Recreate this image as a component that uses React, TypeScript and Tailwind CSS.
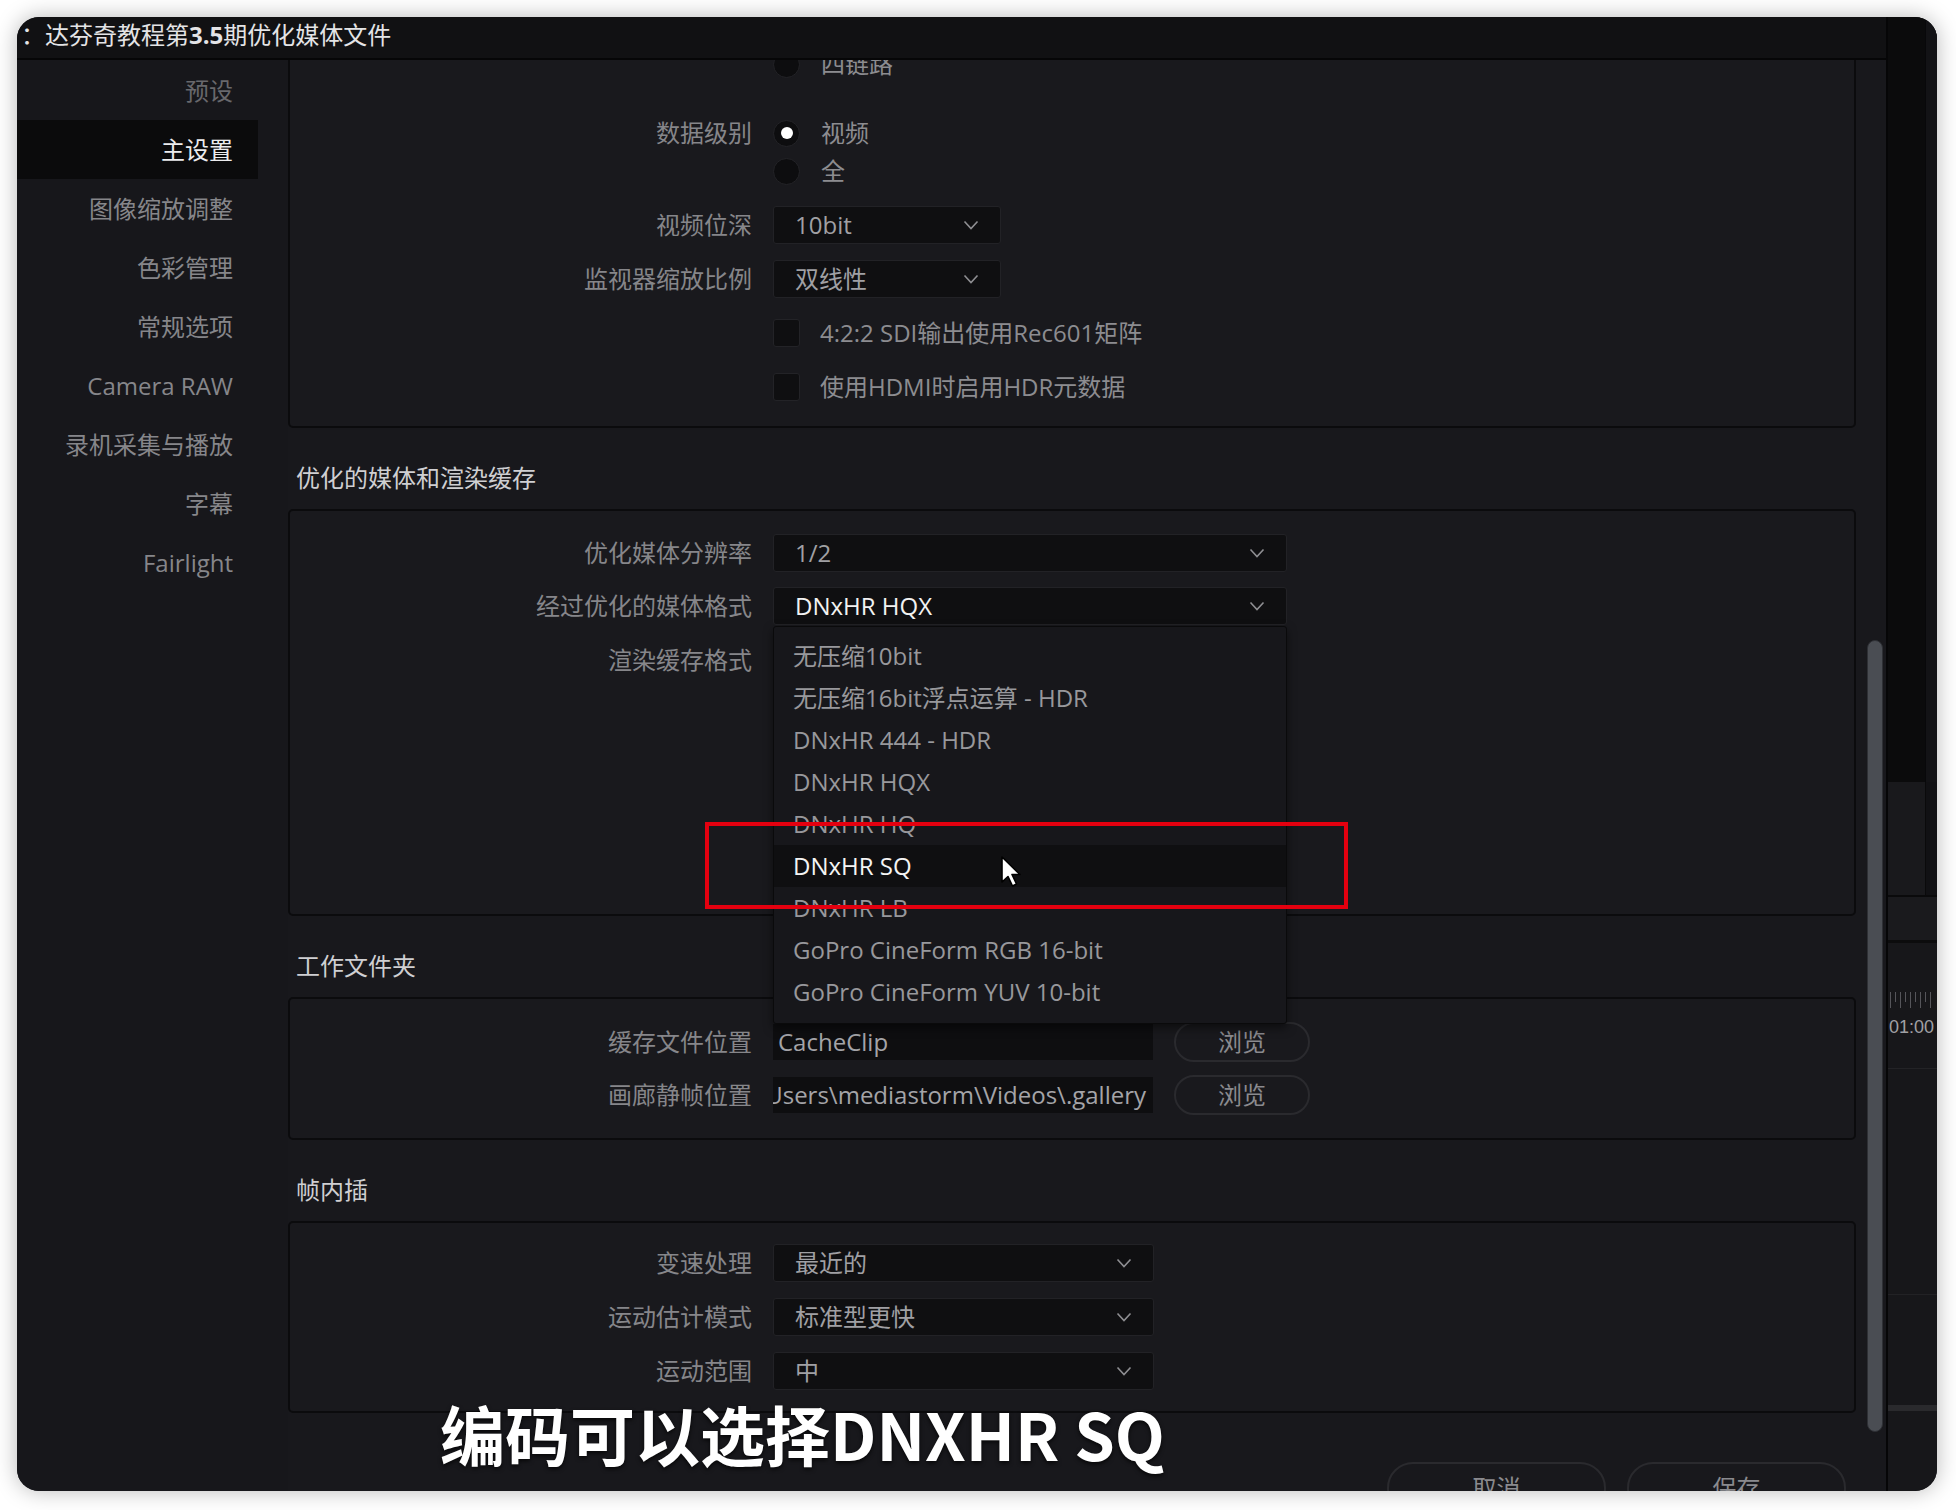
const sidebarItems = [
  { name: "预设", dim: true },
  { name: "主设置", active: true },
  { name: "图像缩放调整" },
  { name: "色彩管理" },
  { name: "常规选项" },
  { name: "Camera RAW" },
  { name: "录机采集与播放" },
  { name: "字幕" },
  { name: "Fairlight" },
];

const formatOptions = [
  "无压缩10bit",
  "无压缩16bit浮点运算 - HDR",
  "DNxHR 444 - HDR",
  "DNxHR HQX",
  "DNxHR HQ",
  "DNxHR SQ",
  "DNxHR LB",
  "GoPro CineForm RGB 16-bit",
  "GoPro CineForm YUV 10-bit",
];

const Chevron = () => (
  <svg width="16" height="10" viewBox="0 0 16 10">
    <path d="M1.5 1.5 L8 8.5 L14.5 1.5" fill="none" stroke="#8e8e92" strokeWidth="1.6" />
  </svg>
);

const Label = ({ children }: { children?: React.ReactNode }) => (
  <div className="w-[483px] shrink-0 pr-[21px] text-right text-[24px] text-[#86868a]">{children}</div>
);

const Select = ({ value, width, bright }: { value: string; width: string; bright?: boolean }) => (
  <div
    className={`flex h-[38px] items-center justify-between rounded-[3px] border border-[#222226] bg-[#0f0f11] pl-[21px] pr-[21px] ${width}`}
  >
    <span className={`text-[24px] ${bright ? "text-[#f2f2f2]" : "text-[#a0a0a4]"}`}>{value}</span>
    <Chevron />
  </div>
);

const Radio = ({ label, checked }: { label: string; checked?: boolean }) => (
  <div className="flex items-center">
    <div className="flex h-[27px] w-[27px] items-center justify-center rounded-full border border-[#232327] bg-[#0d0d0f]">
      {checked && <div className="h-[12px] w-[12px] rounded-full bg-white" />}
    </div>
    <span className="ml-[21px] text-[24px] text-[#8c8c90]">{label}</span>
  </div>
);

const Checkbox = ({ label }: { label: string }) => (
  <div className="flex h-[38px] items-center">
    <Label />
    <div className="h-[28px] w-[27px] rounded-[3px] border border-[#232327] bg-[#0f0f11]" />
    <span className="ml-[20px] text-[24px] text-[#8c8c90]">{label}</span>
  </div>
);

const Browse = () => (
  <div className="ml-[21px] flex h-[40px] w-[136px] items-center justify-center rounded-full border-2 border-[#2a2a2e] text-[24px] text-[#8a8a8e]">
    浏览
  </div>
);

const Heading = ({ children }: { children: React.ReactNode }) => (
  <div className="pb-[15px] pl-[8px] pt-[34px] text-[24px] leading-[32px] text-[#cfcfd2]">{children}</div>
);

const Cursor = () => (
  <svg width="24" height="34" viewBox="0 0 24 34">
    <path
      d="M2 2 L2 27 L8 21.5 L12.5 31 L16.5 29 L12 19.5 L20 19.5 Z"
      fill="#ffffff"
      stroke="#000000"
      strokeWidth="1.6"
      strokeLinejoin="round"
    />
  </svg>
);

export default function App() {
  return (
    <div className="relative h-[1510px] w-[1956px] overflow-hidden bg-white pl-[17px] pt-[17px] font-['Open_Sans','Noto_Sans_CJK_SC',sans-serif]">
      <div className="flex h-[1474px] w-[1920px] overflow-hidden rounded-[22px] bg-[#18181c] shadow-[0_0_22px_rgba(0,0,0,0.28)]">
        {/* left column: title + body */}
        <div className="flex w-[1869px] shrink-0 flex-col">
          <div className="flex h-[43px] shrink-0 items-center border-b-2 border-[#060607] bg-[#111113] pb-[5px] pl-[4px] text-[24px] text-[#e4e4e6]">
            ：达芬奇教程第<span className="font-bold">3.5</span>期优化媒体文件
          </div>

          <div className="flex flex-1 overflow-hidden">
            {/* sidebar */}
            <div className="w-[271px] shrink-0 bg-[#17171b] pt-[1px]">
              {sidebarItems.map((it) => (
                <div
                  key={it.name}
                  className={`flex h-[59px] w-[241px] items-center justify-end pr-[25px] text-[24px] ${
                    it.active ? "bg-[#0b0b0c] text-[#ececee]" : it.dim ? "text-[#68686c]" : "text-[#86868a]"
                  }`}
                >
                  {it.name}
                </div>
              ))}
            </div>

            {/* main */}
            <div className="flex flex-1 bg-[#18181c]">
              <div className="relative w-[1568px] shrink-0">
                {/* box 1 */}
                <div className="-mt-[32px] rounded-[5px] border-2 border-[#0b0b0d] bg-[#19191d] pb-[20px] pt-[15px]">
                  <div className="flex h-[38px] items-center">
                    <Label />
                    <Radio label="四链路" />
                  </div>
                  <div className="mt-[31px] flex h-[38px] items-center">
                    <Label>数据级别</Label>
                    <Radio label="视频" checked />
                  </div>
                  <div className="flex h-[38px] items-center">
                    <Label />
                    <Radio label="全" />
                  </div>
                  <div className="mt-[16px] flex h-[38px] items-center">
                    <Label>视频位深</Label>
                    <Select value="10bit" width="w-[228px]" />
                  </div>
                  <div className="mt-[16px] flex h-[38px] items-center">
                    <Label>监视器缩放比例</Label>
                    <Select value="双线性" width="w-[228px]" />
                  </div>
                  <div className="mt-[16px]">
                    <Checkbox label="4:2:2 SDI输出使用Rec601矩阵" />
                  </div>
                  <div className="mt-[16px]">
                    <Checkbox label="使用HDMI时启用HDR元数据" />
                  </div>
                </div>

                <Heading>优化的媒体和渲染缓存</Heading>

                {/* box 2 */}
                <div className="h-[407px] rounded-[5px] border-2 border-[#0b0b0d] bg-[#19191d] pt-[23px]">
                  <div className="flex h-[38px] items-center">
                    <Label>优化媒体分辨率</Label>
                    <Select value="1/2" width="w-[514px]" />
                  </div>
                  <div className="mt-[15px] flex h-[38px] items-center">
                    <Label>经过优化的媒体格式</Label>
                    <Select value="DNxHR HQX" width="w-[514px]" bright />
                  </div>
                  <div className="mt-[16px] flex h-[38px] items-center">
                    <Label>渲染缓存格式</Label>
                    <div className="h-[38px] w-[514px] rounded-[3px] bg-[#0f0f11]" />
                  </div>
                </div>

                <Heading>工作文件夹</Heading>

                {/* box 3 */}
                <div className="rounded-[5px] border-2 border-[#0b0b0d] bg-[#19191d] pb-[23px] pt-[23px]">
                  <div className="flex h-[40px] items-center">
                    <Label>缓存文件位置</Label>
                    <div className="flex h-[36px] w-[380px] items-center overflow-hidden bg-[#0e0e10] pl-[5px] text-[24px] text-[#a4a4a8]">
                      CacheClip
                    </div>
                    <Browse />
                  </div>
                  <div className="mt-[13px] flex h-[40px] items-center">
                    <Label>画廊静帧位置</Label>
                    <div className="relative h-[36px] w-[380px] overflow-hidden bg-[#0e0e10] text-[24px] text-[#a4a4a8]">
                      <span className="absolute right-[7px] top-1/2 -translate-y-1/2 whitespace-nowrap">
                        C:\Users\mediastorm\Videos\.gallery
                      </span>
                    </div>
                    <Browse />
                  </div>
                </div>

                <Heading>帧内插</Heading>

                {/* box 4 */}
                <div className="rounded-[5px] border-2 border-[#0b0b0d] bg-[#19191d] pb-[21px] pt-[21px]">
                  <div className="flex h-[38px] items-center">
                    <Label>变速处理</Label>
                    <Select value="最近的" width="w-[381px]" />
                  </div>
                  <div className="mt-[16px] flex h-[38px] items-center">
                    <Label>运动估计模式</Label>
                    <Select value="标准型更快" width="w-[381px]" />
                  </div>
                  <div className="mt-[16px] flex h-[38px] items-center">
                    <Label>运动范围</Label>
                    <Select value="中" width="w-[381px]" />
                  </div>
                </div>

                <div className="mt-[49px] flex justify-end gap-[21px] pr-[10px]">
                  <div className="flex h-[52px] w-[219px] items-center justify-center rounded-full border-2 border-[#2a2a2e] text-[24px] text-[#8a8a8e]">
                    取消
                  </div>
                  <div className="flex h-[52px] w-[219px] items-center justify-center rounded-full border-2 border-[#2a2a2e] text-[24px] text-[#8a8a8e]">
                    保存
                  </div>
                </div>

                {/* dropdown popup */}
                <div className="absolute left-[485px] top-[566px] w-[514px] rounded-[3px] border border-[#0a0a0b] bg-[#17171b] pb-[10px] pt-[8px] shadow-[0_4px_10px_rgba(0,0,0,0.5)]">
                  {formatOptions.map((o) => (
                    <div
                      key={o}
                      className={`flex h-[42px] items-center pl-[19px] text-[24px] ${
                        o === "DNxHR SQ" ? "bg-[#0f0f11] text-[#f4f4f4]" : "text-[#98989c]"
                      }`}
                    >
                      {o}
                    </div>
                  ))}
                </div>

                {/* red highlight */}
                <div className="absolute left-[417px] top-[762px] h-[87px] w-[643px] border-[4px] border-[#e4000f]" />

                <div className="absolute left-[712px] top-[795px]">
                  <Cursor />
                </div>
              </div>

              {/* scrollbar */}
              <div className="ml-[11px] pt-[580px]">
                <div className="h-[792px] w-[16px] rounded-full border border-[#2e3035] bg-[#4a4d53]" />
              </div>
            </div>
          </div>
        </div>

        {/* right strip */}
        <div className="flex flex-1 flex-col border-l-2 border-[#060607] bg-[#17171a]">
          <div className="flex h-[765px] shrink-0">
            <div className="w-[37px] bg-[#0b0b0c]" />
            <div className="flex-1 border-l border-[#08080a] bg-[#131316]" />
          </div>
          <div className="flex h-[115px] shrink-0 border-b-2 border-[#0a0a0b]">
            <div className="w-[37px] bg-[#19191c]" />
            <div className="flex-1 border-l border-[#0a0a0b] bg-[#111114]" />
          </div>
          <div className="h-[46px] shrink-0 border-b-[3px] border-[#0c0c0d] bg-[#1a1a1d]" />
          <div className="h-[49px] shrink-0 bg-[#17171a]" />
          <div className="flex h-[77px] shrink-0 flex-col border-b border-[#232326]">
            <div className="flex h-[20px] items-start gap-[4px] pl-[2px]">
              {[16, 10, 16, 10, 16, 10, 16, 10, 16].map((h, i) => (
                <div key={i} className={`w-[1px] bg-[#55555a] ${h === 16 ? "h-[16px]" : "h-[10px]"}`} />
              ))}
            </div>
            <div className="whitespace-nowrap pl-[1px] pt-[6px] font-['Liberation_Sans',sans-serif] text-[18px] leading-none text-[#a0a0a4]">
              01:00
            </div>
          </div>
          <div className="h-[226px] shrink-0 border-b border-[#222225]" />
          <div className="h-[110px] shrink-0" />
          <div className="h-[6px] shrink-0 bg-[#2a2a2d]" />
          <div className="flex-1" />
        </div>
      </div>

      {/* subtitle */}
      <div className="absolute left-[440px] top-[1401px] whitespace-nowrap font-['Noto_Sans_CJK_SC',sans-serif] text-[65px] font-bold leading-none text-white [text-shadow:0_2px_4px_rgba(0,0,0,0.75)]">
        编码可以选择DNXHR SQ
      </div>
    </div>
  );
}
